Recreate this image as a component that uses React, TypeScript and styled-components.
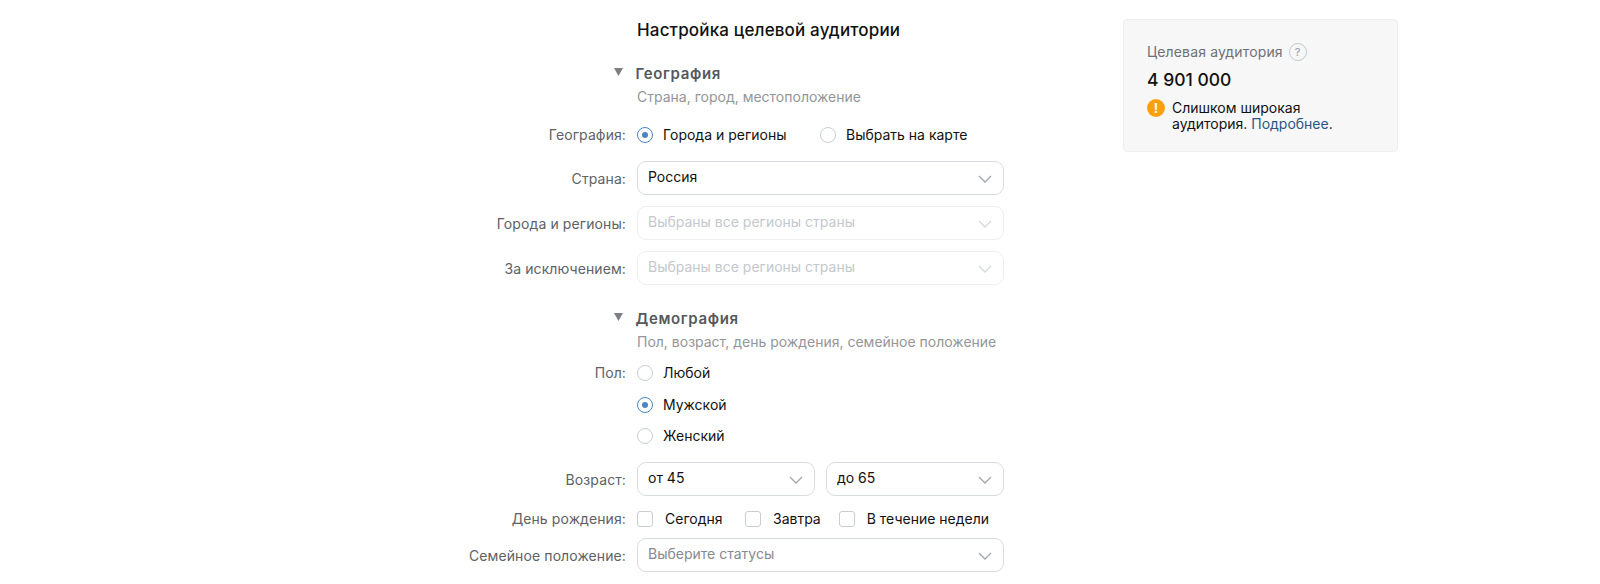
import React from "react";
import styled, { createGlobalStyle } from "styled-components";

const Global = createGlobalStyle`
  html, body { margin: 0; padding: 0; background: #fff; }
  body { font-family: Inter, "Noto Sans", "Liberation Sans", sans-serif; color: #000; overflow: hidden; }
`;

const Page = styled.div`
  width: 1600px;
  height: 584px;
  display: flex;
  align-items: flex-start;
  overflow: hidden;
`;

const Main = styled.main`
  margin-left: 460px;
  width: 544px;
  padding-top: 19px;
  display: flex;
  flex-direction: column;
`;

const Title = styled.h1`
  margin: 0 0 0 177px;
  font-size: 17px;
  line-height: 22px;
  font-weight: 500;
  letter-spacing: 0.16px;
  color: #111;
`;

const SectionHead = styled.div<{ $top: number }>`
  position: relative;
  margin: ${(p) => p.$top}px 0 0 175.5px;
  display: flex;
  flex-direction: column;
`;

const Caret = styled.svg`
  position: absolute;
  left: -21.5px;
  top: 4px;
  width: 9px;
  height: 8px;
`;

const SectionTitle = styled.h2`
  margin: 0;
  font-size: 15px;
  line-height: 20px;
  font-weight: 600;
  letter-spacing: 0.65px;
  color: #55585c;
`;

const SectionSub = styled.div`
  margin: 3px 0 0 1.5px;
  font-size: 14px;
  line-height: 20px;
  color: #939699;
`;

const Row = styled.div<{ $h: number; $top: number }>`
  display: grid;
  grid-template-columns: 166px 1fr;
  column-gap: 11px;
  margin-top: ${(p) => p.$top}px;
  min-height: ${(p) => p.$h}px;
  align-items: center;
`;

const Label = styled.label<{ $start?: boolean; $low?: boolean }>`
  text-align: right;
  align-self: ${(p) => (p.$start ? "start" : "center")};
  margin-top: ${(p) => (p.$low ? "2px" : "0")};
  font-size: 14px;
  line-height: 20px;
  letter-spacing: 0.1px;
  color: #5e6165;
  white-space: nowrap;
`;

const Inline = styled.div<{ $gap: number }>`
  display: flex;
  align-items: center;
  gap: ${(p) => p.$gap}px;
`;

const Stack = styled.div`
  display: flex;
  flex-direction: column;
  gap: 11.5px;
`;

const Radio = styled.span<{ $on?: boolean }>`
  flex: none;
  box-sizing: border-box;
  width: 16px;
  height: 16px;
  border-radius: 50%;
  border: 1px solid ${(p) => (p.$on ? "#4a86c5" : "#c9ced4")};
  display: flex;
  align-items: center;
  justify-content: center;
  background: #fff;
  &::after {
    content: "";
    width: 6px;
    height: 6px;
    border-radius: 50%;
    background: ${(p) => (p.$on ? "#4a86c5" : "transparent")};
  }
`;

const Check = styled.span`
  flex: none;
  box-sizing: border-box;
  width: 16px;
  height: 16px;
  border-radius: 3px;
  border: 1px solid #c9ced4;
  background: #fff;
`;

const Option = styled.span<{ $w?: number; $gap?: number }>`
  display: inline-flex;
  align-items: center;
  gap: ${(p) => p.$gap ?? 10}px;
  font-size: 14px;
  line-height: 20px;
  color: #111;
  white-space: nowrap;
  width: ${(p) => (p.$w ? `${p.$w}px` : "auto")};
`;

const Select = styled.div<{ $disabled?: boolean; $half?: boolean }>`
  box-sizing: border-box;
  height: 34px;
  width: ${(p) => (p.$half ? "178px" : "367px")};
  padding: 0 11px 4px 10px;
  border-radius: 9px;
  border: 1px solid ${(p) => (p.$disabled ? "#eceef0" : "#d8dce1")};
  background: #fff;
  display: flex;
  align-items: center;
  justify-content: space-between;
  font-size: 14px;
  color: #111;
`;

const Placeholder = styled.span<{ $disabled?: boolean }>`
  color: ${(p) => (p.$disabled ? "#c4c8cd" : "#858a90")};
`;

const Chevron = styled.svg<{ $disabled?: boolean }>`
  width: 14px;
  height: 8px;
  margin-top: 6px;
  fill: none;
  stroke: ${(p) => (p.$disabled ? "#d5d8dc" : "#a2a7ad")};
  stroke-width: 1.3;
`;

const Card = styled.aside`
  box-sizing: border-box;
  margin: 19px 0 0 119px;
  width: 275px;
  height: 133px;
  padding: 22px 24px 0 23px;
  background: #f7f7f8;
  border: 1px solid #eeeff1;
  border-radius: 4px;
`;

const CardHead = styled.div`
  display: flex;
  align-items: center;
  gap: 6px;
  font-size: 14px;
  line-height: 20px;
  letter-spacing: 0.15px;
  color: #6d7175;
`;

const Help = styled.span`
  box-sizing: border-box;
  width: 18px;
  height: 18px;
  border-radius: 50%;
  border: 1px solid #c3cad2;
  display: flex;
  align-items: center;
  justify-content: center;
  font-size: 11px;
  color: #8e969e;
`;

const Count = styled.div`
  margin-top: 7px;
  font-size: 17.5px;
  line-height: 22px;
  font-weight: 500;
  color: #111;
`;

const Warning = styled.div`
  margin-top: 9px;
  display: flex;
  gap: 7px;
  font-size: 14px;
  line-height: 16px;
  color: #111;
`;

const WarnDot = styled.span`
  flex: none;
  width: 18px;
  height: 18px;
  margin-top: -1px;
  border-radius: 50%;
  background: #f9a00f;
  color: #fff;
  font-size: 13px;
  font-weight: 700;
  line-height: 18px;
  text-align: center;
`;

const WarnLink = styled.a`
  color: #2a5885;
`;

const Arrow = ({ disabled }: { disabled?: boolean }) => (
  <Chevron $disabled={disabled} viewBox="0 0 14 8">
    <path d="M1 1l6 6 6-6" />
  </Chevron>
);

const Tri = () => (
  <Caret viewBox="0 0 9 8">
    <path d="M0 0h9L4.5 8z" fill="#7c7f83" />
  </Caret>
);

export default function App() {
  return (
    <Page>
      <Global />
      <Main>
        <Title>Настройка целевой аудитории</Title>
        <SectionHead $top={23}>
          <Tri />
          <SectionTitle>География</SectionTitle>
          <SectionSub>Страна, город, местоположение</SectionSub>
        </SectionHead>
        <Row $h={20} $top={18}>
          <Label>География:</Label>
          <Inline $gap={34}>
            <Option $w={149}><Radio $on />Города и регионы</Option>
            <Option><Radio />Выбрать на карте</Option>
          </Inline>
        </Row>
        <Row $h={34} $top={16}>
          <Label $low>Страна:</Label>
          <Select><span>Россия</span><Arrow /></Select>
        </Row>
        <Row $h={34} $top={11}>
          <Label $low>Города и регионы:</Label>
          <Select $disabled><Placeholder $disabled>Выбраны все регионы страны</Placeholder><Arrow disabled /></Select>
        </Row>
        <Row $h={34} $top={11}>
          <Label $low>За исключением:</Label>
          <Select $disabled><Placeholder $disabled>Выбраны все регионы страны</Placeholder><Arrow disabled /></Select>
        </Row>
        <SectionHead $top={24}>
          <Tri />
          <SectionTitle>Демография</SectionTitle>
          <SectionSub>Пол, возраст, день рождения, семейное положение</SectionSub>
        </SectionHead>
        <Row $h={83} $top={11}>
          <Label $start>Пол:</Label>
          <Stack>
            <Option><Radio />Любой</Option>
            <Option><Radio $on />Мужской</Option>
            <Option><Radio />Женский</Option>
          </Stack>
        </Row>
        <Row $h={34} $top={16}>
          <Label $low>Возраст:</Label>
          <Inline $gap={11}>
            <Select $half><span>от 45</span><Arrow /></Select>
            <Select $half><span>до 65</span><Arrow /></Select>
          </Inline>
        </Row>
        <Row $h={20} $top={13}>
          <Label>День рождения:</Label>
          <Inline $gap={18}>
            <Option $gap={12} $w={90}><Check />Сегодня</Option>
            <Option $gap={12}><Check />Завтра</Option>
            <Option $gap={12}><Check />В течение недели</Option>
          </Inline>
        </Row>
        <Row $h={34} $top={9}>
          <Label $low>Семейное положение:</Label>
          <Select><Placeholder>Выберите статусы</Placeholder><Arrow /></Select>
        </Row>
      </Main>
      <Card>
        <CardHead>Целевая аудитория <Help>?</Help></CardHead>
        <Count>4 901 000</Count>
        <Warning>
          <WarnDot>!</WarnDot>
          <span>Слишком широкая<br />аудитория. <WarnLink>Подробнее</WarnLink>.</span>
        </Warning>
      </Card>
    </Page>
  );
}
